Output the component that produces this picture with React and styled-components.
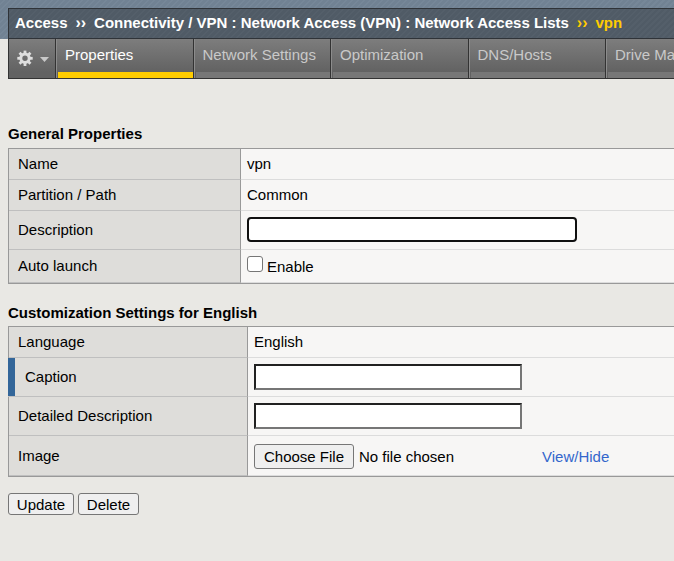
import React from "react";
import styled, { createGlobalStyle, css } from "styled-components";

const GlobalStyle = createGlobalStyle`
  * { box-sizing: border-box; }
  body {
    margin: 0;
    overflow: hidden;
    background: #e9e8e4;
    font-family: "Liberation Sans", Arial, sans-serif;
    font-size: 15px;
    color: #000;
  }
  input, button { font-family: inherit; font-size: inherit; color: inherit; }
`;

const Page = styled.div`
  height: 561px;
  overflow: hidden;
`;

const stripes = (base, line) => css`
  background: repeating-linear-gradient(135deg, ${base} 0 2.4px, ${line} 2.4px 4.24px);
`;

const Band = styled.header`
  height: 39px;
  padding: 8px 0 0 8px;
  ${stripes("#718293", "#768798")}
`;

const Breadcrumb = styled.nav`
  display: flex;
  align-items: center;
  height: 31px;
  padding: 0 0 2px 6px;
  border: 1px solid #2f3338;
  border-right: 0;
  font-weight: bold;
  white-space: pre;
  ${stripes("#505b66", "#545f6a")}
`;

const Crumb = styled.span`
  color: ${(p) => (p.$current ? "#fc0" : "#fff")};
`;

const Separator = styled(Crumb)`
  width: 26.5px;
  font-size: 16px;
  line-height: 17px;
  text-align: center;
`;

const TabBar = styled.div`
  display: flex;
  height: 40px;
  margin-left: 8px;
  border-left: 1px solid #333;
  border-bottom: 1px solid #333;
  background: linear-gradient(#7d7d7d, #626262 33px);
`;

const GearTab = styled.div`
  display: flex;
  align-items: center;
  flex: none;
  width: 47px;
  padding-left: 8px;
  border-right: 1px solid #333;
  svg { display: block; }
`;

const Tab = styled.div`
  flex: none;
  width: 137.5px;
  padding: 7px 0 0 8px;
  border-left: 1px solid #8c8c8c;
  border-right: 1px solid #333;
  line-height: 18px;
  white-space: nowrap;
  color: ${(p) => (p.$active ? "#fff" : "#c9c9c9")};
  background: linear-gradient(${(p) => (p.$active ? "#fc0, #fc0" : "#777, #777")})
    right bottom / calc(100% - 1px) 6px no-repeat;
`;

const Main = styled.main`
  padding-left: 8px;
`;

const Heading = styled.h2`
  display: flex;
  align-items: flex-end;
  height: ${(p) => p.$height}px;
  margin: 0;
  padding-bottom: ${(p) => p.$gap}px;
  font-size: 15px;
  line-height: 17px;
`;

const Table = styled.div`
  display: grid;
  grid-template-columns: ${(p) => p.$labelWidth}px 1fr;
  grid-template-rows: ${(p) => p.$rows};
  border: 1px solid #999;
  border-right: 0;
`;

const Label = styled.div`
  display: flex;
  align-items: center;
  padding: 0 0 ${(p) => p.$lift ?? 2}px 9px;
  background: #dedddA;
  border-right: 1px solid #999;
  border-bottom: 1px solid #bfbfbf;
  ${(p) =>
    p.$marked &&
    css`
      margin-left: -1px;
      padding-left: 17px;
      background: linear-gradient(#369, #369) left / 7px 100% no-repeat #dedddA;
    `}
`;

const Value = styled.div`
  display: flex;
  align-items: center;
  padding: ${(p) => p.$drop || 0}px 0 ${(p) => p.$lift || 0}px 6px;
  background: #f7f6f5;
  border-bottom: 1px solid #dcdcdc;
  white-space: nowrap;
`;

const FocusedInput = styled.input`
  width: 330px;
  height: 25px;
  border: 2px solid #101010;
  border-radius: 4px;
  background: #fff;
  outline: 0;
`;

const TextInput = styled.input`
  width: 268px;
  height: 26px;
  border: 2px solid;
  border-color: #212121 #767676 #767676 #212121;
  background: #fff;
  outline: 0;
`;

const Checkbox = styled.input`
  appearance: none;
  width: 16px;
  height: 16px;
  margin: 0 4px 3px 0;
  border: 1px solid #767676;
  border-radius: 3px;
  background: #fff;
`;

const CheckLabel = styled.span`
  padding-top: 2px;
`;

const Button = styled.button`
  width: ${(p) => p.$width}px;
  height: ${(p) => p.$height}px;
  padding: 0;
  border: 1px solid #767676;
  border-radius: 3px;
  background: #efefef;
`;

const FileStatus = styled.span`
  width: 183px;
  margin-left: 5px;
`;

const Link = styled.a`
  color: #36c;
`;

const Actions = styled.div`
  display: flex;
  gap: 4px;
  padding-top: 16px;
`;

const Gear = () => (
  <svg width="38" height="20" viewBox="0 0 38 20">
    <g transform="translate(8 9.3)" fill="none" stroke="#dedede">
      <circle r="4.2" strokeWidth="3" />
      {[0, 45, 90, 135, 180, 225, 270, 315].map((a) => (
        <path key={a} d="M0-5V-7.7" strokeWidth="2.8" transform={`rotate(${a})`} />
      ))}
    </g>
    <path d="M23 8h9l-4.5 5z" fill="#c8c8c8" />
  </svg>
);

const tabs = ["Properties", "Network Settings", "Optimization", "DNS/Hosts", "Drive Mappings"];

export default function App() {
  return (
    <Page>
      <GlobalStyle />
      <Band>
        <Breadcrumb>
          <Crumb>Access</Crumb>
          <Separator>››</Separator>
          <Crumb>Connectivity / VPN : Network Access (VPN) : Network Access Lists</Crumb>
          <Separator $current>››</Separator>
          <Crumb $current>vpn</Crumb>
        </Breadcrumb>
      </Band>
      <TabBar>
        <GearTab><Gear /></GearTab>
        {tabs.map((t, i) => (
          <Tab key={t} $active={i === 0}>{t}</Tab>
        ))}
      </TabBar>
      <Main>
        <Heading $height={69} $gap={6}>General Properties</Heading>
        <Table $labelWidth={232} $rows="31px 31px 39px 33px">
          <Label>Name</Label>
          <Value $lift={2}>vpn</Value>
          <Label>Partition / Path</Label>
          <Value $lift={2}>Common</Value>
          <Label>Description</Label>
          <Value $lift={1}><FocusedInput type="text" /></Value>
          <Label>Auto launch</Label>
          <Value $lift={2}><Checkbox type="checkbox" /><CheckLabel>Enable</CheckLabel></Value>
        </Table>
        <Heading $height={42} $gap={5}>Customization Settings for English</Heading>
        <Table $labelWidth={239} $rows="31px 39px 39px 40px">
          <Label $lift={2}>Language</Label>
          <Value $lift={2}>English</Value>
          <Label $marked>Caption</Label>
          <Value><TextInput type="text" /></Value>
          <Label>Detailed Description</Label>
          <Value><TextInput type="text" /></Value>
          <Label $lift={1}>Image</Label>
          <Value $drop={2}>
            <Button $width={100} $height={25}>Choose File</Button>
            <FileStatus>No file chosen</FileStatus>
            <Link>View/Hide</Link>
          </Value>
        </Table>
        <Actions>
          <Button $width={66} $height={22}>Update</Button>
          <Button $width={61} $height={22}>Delete</Button>
        </Actions>
      </Main>
    </Page>
  );
}
